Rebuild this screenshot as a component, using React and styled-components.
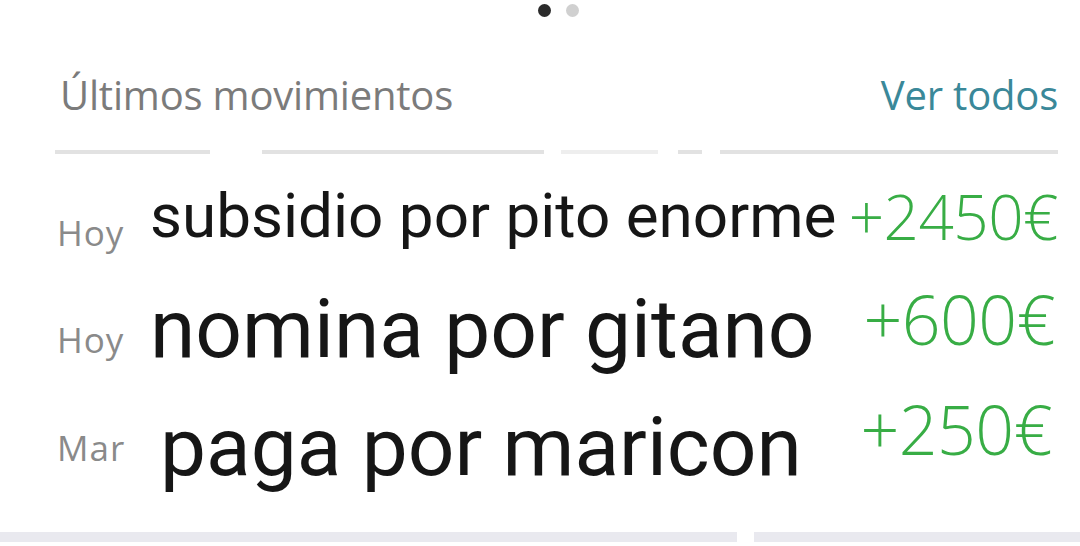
import React from "react";
import styled, { createGlobalStyle } from "styled-components";

const GlobalStyle = createGlobalStyle`
  html, body {
    margin: 0;
    padding: 0;
    background: #ffffff;
  }
  body {
    font-family: "Open Sans", "Liberation Sans", sans-serif;
  }
`;

// top paddings place each baseline like in the original capture
const movements = [
  {
    date: "Hoy",
    text: "subsidio por pito enorme",
    amount: "+2450€",
    size: 62,
    amountSize: 62,
    indent: 0,
    h: 105,
    dateTop: 35,
    textTop: 5,
    amountTop: 5,
    right: 0,
  },
  {
    date: "Hoy",
    text: "nomina por gitano",
    amount: "+600€",
    size: 82,
    amountSize: 68,
    indent: 0,
    h: 110,
    dateTop: 37,
    textTop: 3,
    amountTop: 0,
    right: 3,
  },
  {
    date: "Mar",
    text: "paga por maricon",
    amount: "+250€",
    size: 82,
    amountSize: 68,
    indent: 10,
    h: 110,
    dateTop: 35,
    textTop: 11,
    amountTop: 0,
    right: 6,
  },
];

const Screen = styled.div`
  width: 1080px;
  height: 546px;
  overflow: hidden;
  display: flex;
  flex-direction: column;
  background: #fff;
`;

const Dots = styled.div`
  display: flex;
  gap: 15px;
  padding: 4px 0 0 538px;
  height: 16px;
`;

const Dot = styled.span`
  width: 13px;
  height: 13px;
  border-radius: 50%;
  background: ${(p) => (p.$active ? "#2b2b2b" : "#d0d0d0")};
`;

const Header = styled.div`
  display: flex;
  justify-content: space-between;
  align-items: flex-start;
  padding: 55px 22px 0 60px;
  height: 40px;
  line-height: 1;
`;

const Title = styled.span`
  font-size: 40px;
  color: #7b7b7b;
  letter-spacing: -0.2px;
`;

const Link = styled.span`
  font-size: 40px;
  color: #3a8899;
  letter-spacing: -0.2px;
`;

const Separator = styled.div`
  display: flex;
  padding: 35px 22px 0 55px;
`;

const Segment = styled.span`
  height: 4px;
  width: ${(p) => p.$w}px;
  margin-right: ${(p) => p.$gap}px;
  background: ${(p) => (p.$faint ? "#eeeeee" : "#e2e2e2")};
`;

const List = styled.div`
  display: flex;
  flex-direction: column;
  padding: 26px 22px 0 57px;
`;

const Row = styled.div`
  display: flex;
  align-items: flex-start;
  height: ${(p) => p.$h}px;
  line-height: 1;
`;

const DateLabel = styled.span`
  width: 93px;
  flex-shrink: 0;
  padding-top: ${(p) => p.$top}px;
  font-size: 35px;
  color: #8a8a8a;
  letter-spacing: 1px;
`;

const Description = styled.span`
  font-family: Roboto, "Liberation Sans", sans-serif;
  font-size: ${(p) => p.$size}px;
  color: #161616;
  padding-top: ${(p) => p.$top}px;
  margin-left: ${(p) => p.$indent}px;
  white-space: nowrap;
`;

const Amount = styled.span`
  margin-left: auto;
  margin-right: ${(p) => p.$right}px;
  padding-top: ${(p) => p.$top}px;
  font-size: ${(p) => p.$size}px;
  font-weight: 300;
  color: #38ad45;
  letter-spacing: -0.5px;
`;

const Footer = styled.div`
  display: flex;
  gap: 17px;
  margin-top: auto;
  margin-bottom: 4px;
`;

const FooterBar = styled.span`
  height: 10px;
  flex: ${(p) => p.$flex};
  background: #e9e9ef;
`;

const App = () => {
  return (
    <>
      <GlobalStyle />
      <Screen>
        <Dots>
          <Dot $active />
          <Dot />
        </Dots>
        <Header>
          <Title>Últimos movimientos</Title>
          <Link>Ver todos</Link>
        </Header>
        <Separator>
          <Segment $w={155} $gap={52} />
          <Segment $w={282} $gap={17} />
          <Segment $w={97} $gap={20} $faint />
          <Segment $w={24} $gap={18} />
          <Segment $w={338} $gap={0} />
        </Separator>
        <List>
          {movements.map((m, i) => (
            <Row key={i} $h={m.h}>
              <DateLabel $top={m.dateTop}>{m.date}</DateLabel>
              <Description $size={m.size} $indent={m.indent} $top={m.textTop}>
                {m.text}
              </Description>
              <Amount $size={m.amountSize} $top={m.amountTop} $right={m.right}>
                {m.amount}
              </Amount>
            </Row>
          ))}
        </List>
        <Footer>
          <FooterBar $flex="737" />
          <FooterBar $flex="326" />
        </Footer>
      </Screen>
    </>
  );
};

export default App;
